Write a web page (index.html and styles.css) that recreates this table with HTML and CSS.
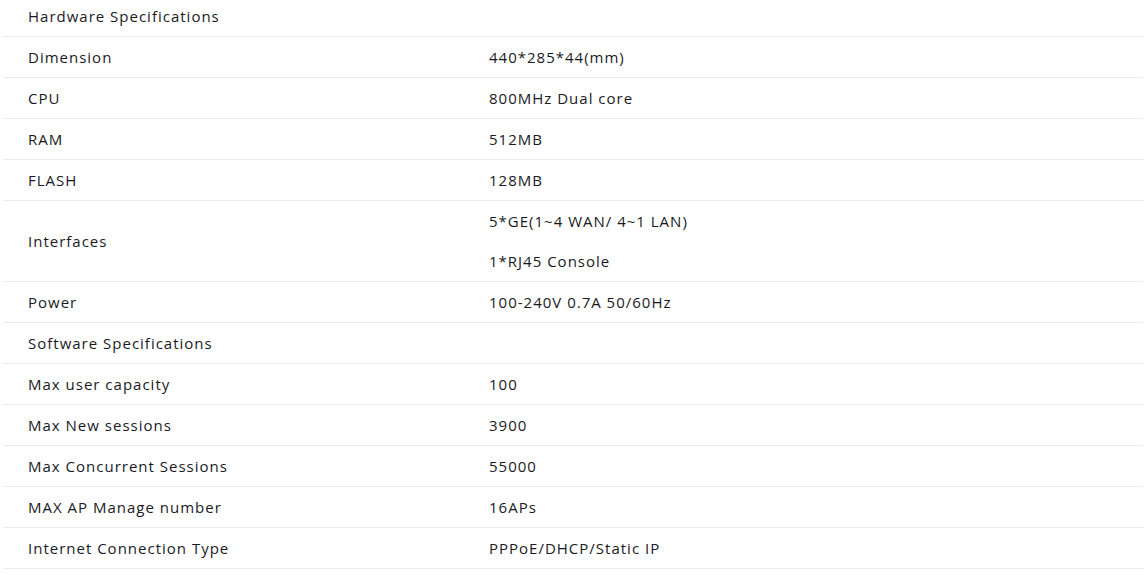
FILE: index.html
```html
<!DOCTYPE html>
<html>
<head>
<meta charset="utf-8">
<link rel="stylesheet" href="styles.css">
</head>
<body>
<div class="wrap">
<table class="spec">
  <colgroup><col class="c1"><col class="c2"></colgroup>
  <tr class="first"><td>Hardware Specifications</td><td></td></tr>
  <tr><td>Dimension</td><td><p>440*285*44(mm)</p></td></tr>
  <tr><td>CPU</td><td><p>800MHz Dual core</p></td></tr>
  <tr><td>RAM</td><td><p>512MB</p></td></tr>
  <tr><td>FLASH</td><td><p>128MB</p></td></tr>
  <tr><td>Interfaces</td><td><p>5*GE(1~4 WAN/ 4~1 LAN)</p><p>1*RJ45 Console</p></td></tr>
  <tr><td>Power</td><td><p>100-240V 0.7A 50/60Hz</p></td></tr>
  <tr><td>Software Specifications</td><td></td></tr>
  <tr><td>Max user capacity</td><td><p>100</p></td></tr>
  <tr><td>Max New sessions</td><td><p>3900</p></td></tr>
  <tr><td>Max Concurrent Sessions</td><td><p>55000</p></td></tr>
  <tr><td>MAX AP Manage number</td><td><p>16APs</p></td></tr>
  <tr><td>Internet Connection Type</td><td><p>PPPoE/DHCP/Static IP</p></td></tr>
</table>
</div>
</body>
</html>
```

FILE: styles.css
```css
html, body {
  margin: 0;
  padding: 0;
  background: #fff;
}
.wrap {
  padding: 0 3px;
  margin-top: -4px;
}
.spec {
  width: 100%;
  border-collapse: collapse;
  font-family: "Open Sans", "Liberation Sans", sans-serif;
  font-size: 15px;
  letter-spacing: 1px;
  color: #1a1a24;
  table-layout: fixed;
}
.c1 { width: 461px; }
.spec td {
  border-bottom: 1px solid #ebebeb;
  padding: 0 0 0 25px;
  height: 40px;
  line-height: 40px;
  vertical-align: middle;
}
.spec td p {
  margin: 0;
  line-height: 40px;
}
```
